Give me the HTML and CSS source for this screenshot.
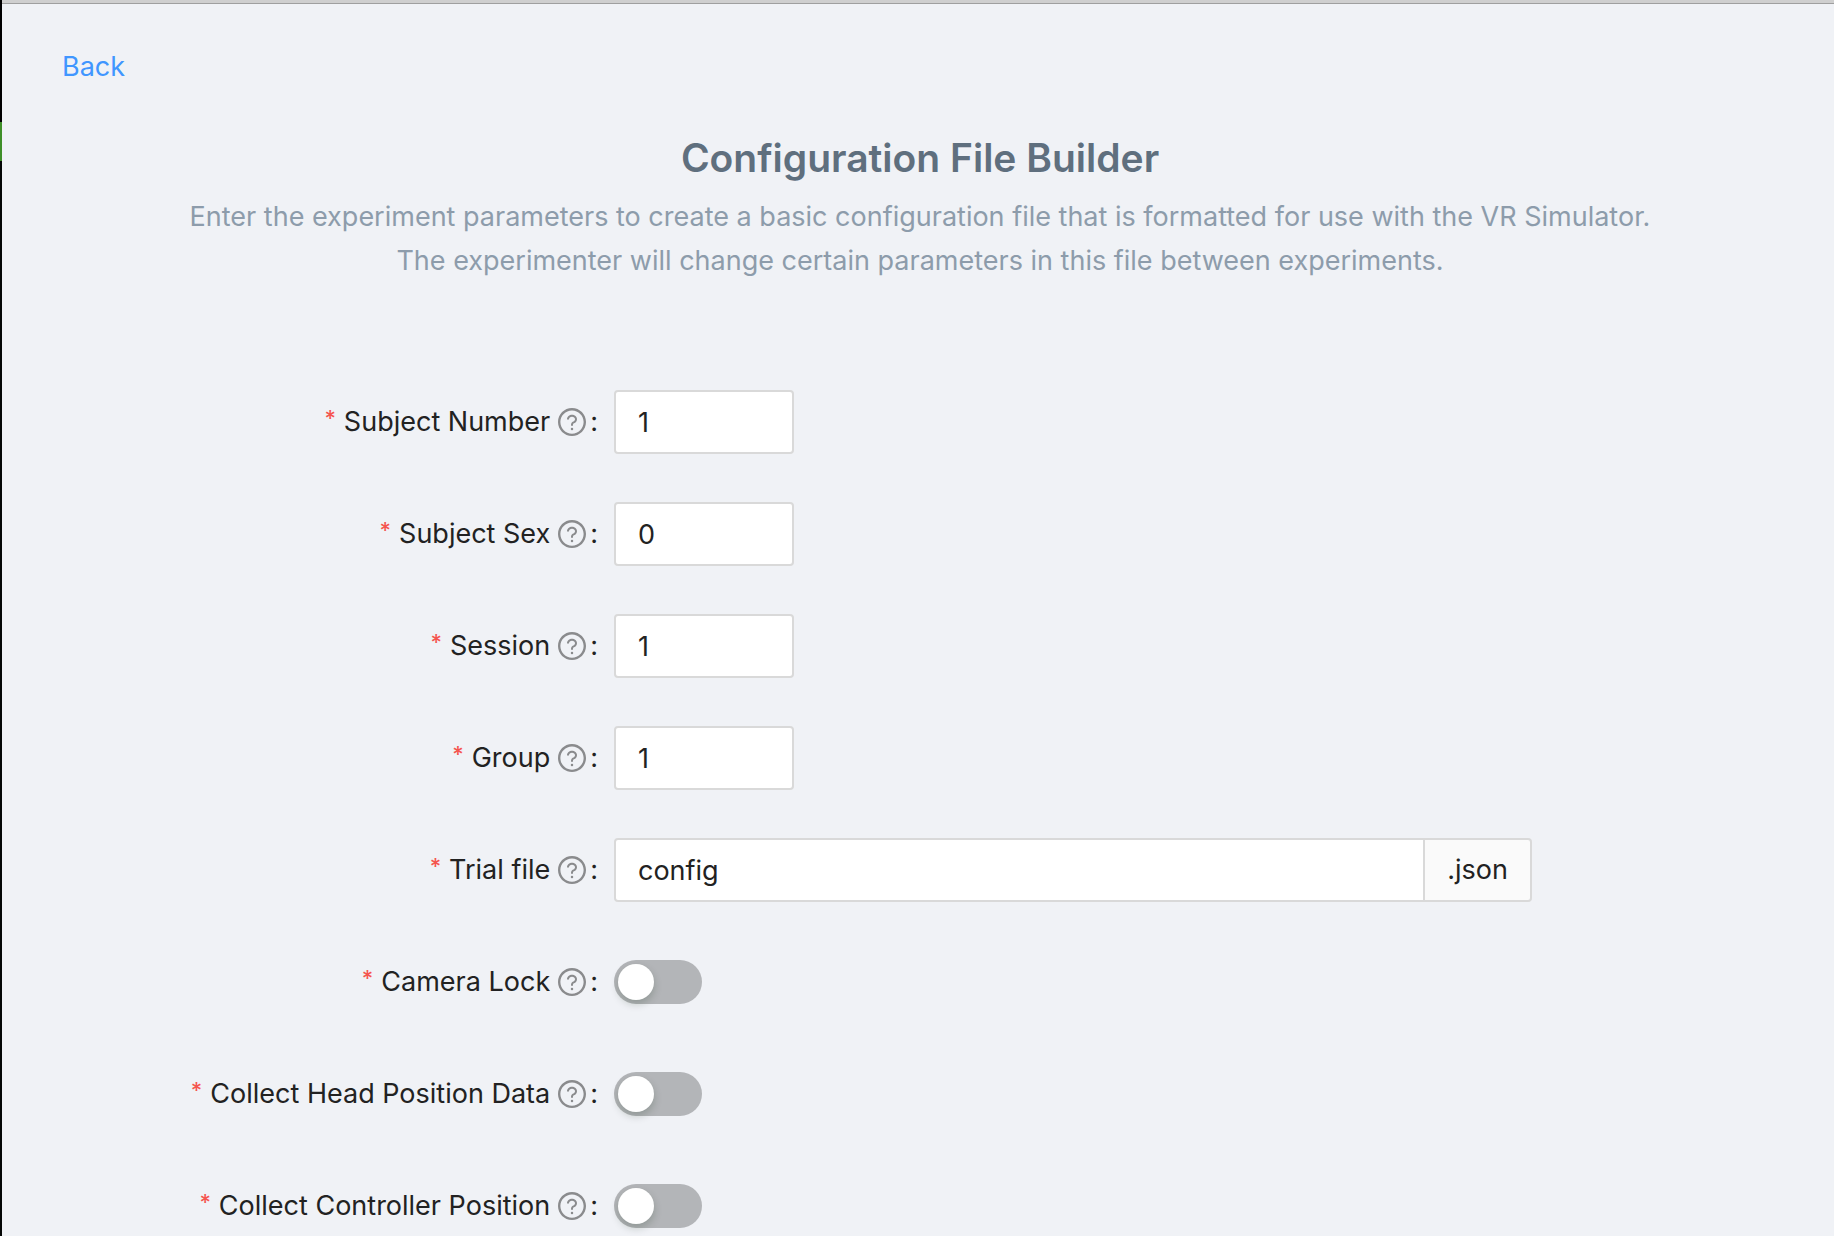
FILE: index.html
```html
<!DOCTYPE html>
<html lang="en">
<head>
<meta charset="utf-8">
<meta name="viewport" content="width=device-width, initial-scale=1">
<title>Configuration File Builder</title>
<link rel="stylesheet" href="styles.css">
</head>
<body>
<svg class="sprite" aria-hidden="true">
  <symbol id="help" viewBox="64 64 896 896">
    <path d="M512 64C264.600 64 64 264.600 64 512s200.600 448 448 448 448-200.600 448-448S759.400 64 512 64zm0 820c-205.400 0-372-166.600-372-372s166.600-372 372-372 372 166.600 372 372-166.600 372-372 372z"/>
    <path d="M623.600 316.700C593.600 290.400 554 276 512 276s-81.600 14.500-111.600 40.700C369.200 344 352 380.700 352 420v7.600c0 4.400 3.600 8 8 8h48c4.400 0 8-3.600 8-8V420c0-44.100 43.100-80 96-80s96 35.900 96 80c0 31.100-22 59.600-56.100 72.700-21.200 8.100-39.200 22.300-52.100 40.900-13.100 19-19.900 41.800-19.900 64.900V620c0 4.400 3.600 8 8 8h48c4.400 0 8-3.600 8-8v-22.700a48.300 48.300 0 0 1 30.900-44.800c59-22.700 97.100-74.700 97.100-132.500.1-39.300-17.100-76-48.300-103.300zM472 732a40 40 0 1 0 80 0 40 40 0 1 0-80 0z"/>
  </symbol>
</svg>
<div class="window">
  <div class="titlebar"></div>
  <nav class="nav"><a class="back" href="#">Back</a></nav>
  <main>
    <header class="intro">
      <h1 class="title">Configuration File Builder</h1>
      <p class="lead">Enter the experiment parameters to create a basic configuration file that is formatted for use with the VR Simulator.<br>The experimenter will change certain parameters in this file between experiments.</p>
    </header>
    <form class="form">
      <div class="row">
        <label class="label" for="number"><span class="star">*</span><span>Subject Number</span><svg class="help"><use href="#help"/></svg><span class="colon">:</span></label>
        <div class="field"><input class="input short" id="number" type="text" inputmode="numeric" value="1"></div>
      </div>
      <div class="row">
        <label class="label" for="sex"><span class="star">*</span><span>Subject Sex</span><svg class="help"><use href="#help"/></svg><span class="colon">:</span></label>
        <div class="field"><input class="input short" id="sex" type="text" inputmode="numeric" value="0"></div>
      </div>
      <div class="row">
        <label class="label" for="session"><span class="star">*</span><span>Session</span><svg class="help"><use href="#help"/></svg><span class="colon">:</span></label>
        <div class="field"><input class="input short" id="session" type="text" inputmode="numeric" value="1"></div>
      </div>
      <div class="row">
        <label class="label" for="group"><span class="star">*</span><span>Group</span><svg class="help"><use href="#help"/></svg><span class="colon">:</span></label>
        <div class="field"><input class="input short" id="group" type="text" inputmode="numeric" value="1"></div>
      </div>
      <div class="row">
        <label class="label" for="file"><span class="star">*</span><span>Trial file</span><svg class="help"><use href="#help"/></svg><span class="colon">:</span></label>
        <div class="field"><input class="input joined" id="file" type="text" value="config"><span class="addon">.json</span></div>
      </div>
      <div class="row">
        <label class="label" for="camera"><span class="star">*</span><span>Camera Lock</span><svg class="help"><use href="#help"/></svg><span class="colon">:</span></label>
        <div class="field"><input class="switch" id="camera" type="checkbox" role="switch"></div>
      </div>
      <div class="row">
        <label class="label" for="head"><span class="star">*</span><span>Collect Head Position Data</span><svg class="help"><use href="#help"/></svg><span class="colon">:</span></label>
        <div class="field"><input class="switch" id="head" type="checkbox" role="switch"></div>
      </div>
      <div class="row">
        <label class="label" for="controller"><span class="star">*</span><span>Collect Controller Position</span><svg class="help"><use href="#help"/></svg><span class="colon">:</span></label>
        <div class="field"><input class="switch" id="controller" type="checkbox" role="switch"></div>
      </div>
    </form>
  </main>
</div>
</body>
</html>
```
FILE: styles.css
```css
* {
  box-sizing: border-box;
}

html {
  overflow: hidden;
}

body {
  margin: 0;
  background: linear-gradient(#000 122px, #3f8f29 122px, #3f8f29 161px, #050706 161px);
  color: #222;
  font: 27px/44px Inter, "Liberation Sans", sans-serif;
}

.sprite {
  display: none;
}

/* The window runs slightly past the right edge of the desktop. */
.window {
  min-height: 100vh;
  margin: 0 -4px 0 2px;
  background: #f0f2f6;
  border-bottom-left-radius: 8px;
}

.titlebar {
  height: 4px;
  background: #cfcfcf;
  border-bottom: 1px solid #9f9f9f;
}

.nav {
  padding: 41px 60px 0;
}

.back {
  color: #4096ff;
  text-decoration: none;
}

.intro {
  padding: 43px 60px 0;
  text-align: center;
}

.title {
  margin: 0;
  color: #5f6f7e;
  font-size: 39px;
  font-weight: 600;
  line-height: 52px;
}

.lead {
  margin: 11px 0 0;
  color: #8d9cab;
}

.form {
  display: flex;
  flex-direction: column;
  gap: 48px;
  padding: 107px 0 8px;
}

.row {
  display: grid;
  grid-template-columns: 8fr 12fr 4fr;
  align-items: center;
  height: 64px;
}

.label {
  display: flex;
  align-items: center;
  justify-content: flex-end;
  gap: 8px;
  padding-right: 16px;
  white-space: nowrap;
}

.star {
  padding-bottom: 8px;
  color: #f5554f;
  font-size: 22px;
  font-weight: 500;
}

.help {
  width: 28px;
  height: 28px;
  fill: #8a8b8d;
}

.colon {
  margin-left: -4px;
}

.field {
  display: flex;
  align-items: center;
}

.input {
  flex: 1;
  min-width: 0;
  height: 64px;
  margin: 0;
  padding: 0 22px;
  border: 2px solid #d9d9d9;
  border-radius: 4px;
  background: #fff;
  color: inherit;
  font: inherit;
}

.short {
  flex: 0 0 180px;
}

.joined {
  border-radius: 4px 0 0 4px;
}

.addon {
  height: 64px;
  padding: 0 22px;
  border: 2px solid #d9d9d9;
  border-left: 0;
  border-radius: 0 4px 4px 0;
  background: #fafafa;
  line-height: 60px;
}

.switch {
  appearance: none;
  width: 88px;
  height: 44px;
  margin: 0;
  padding: 4px;
  border-radius: 22px;
  background: #b3b5b8;
}

.switch::before {
  content: "";
  display: block;
  width: 36px;
  height: 36px;
  border-radius: 50%;
  background: #fff;
  box-shadow: 0 4px 8px rgba(0, 35, 11, 0.2);
}

.switch:checked {
  background: #1890ff;
}

.switch:checked::before {
  margin-left: auto;
}
```
